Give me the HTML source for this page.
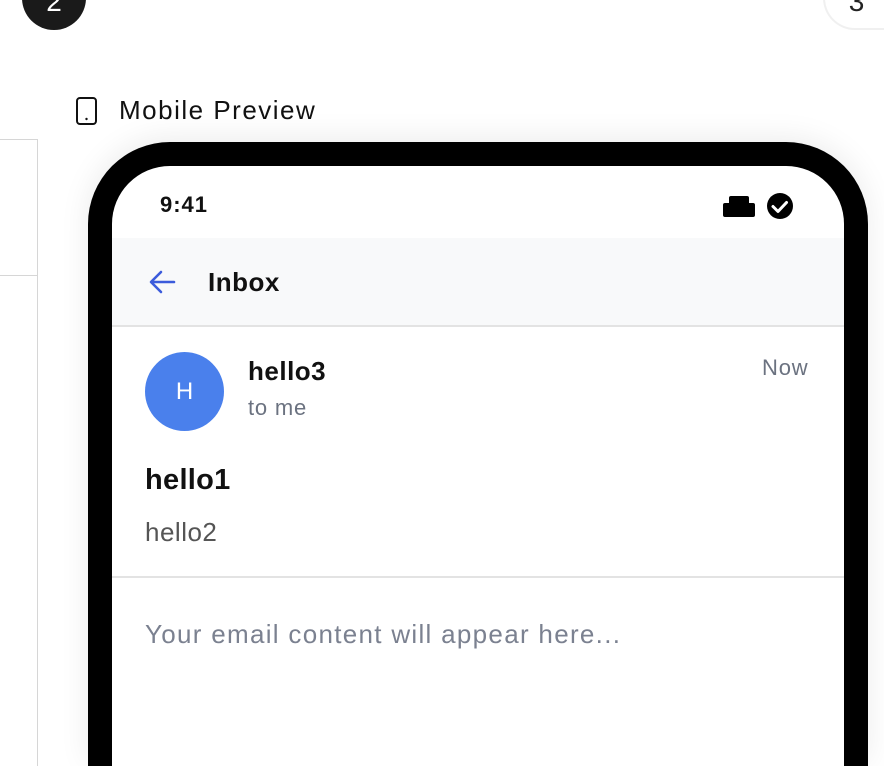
<!DOCTYPE html>
<html style="width:884px;height:766px;overflow:hidden"><head><style>
*{margin:0;padding:0;box-sizing:border-box}
body{width:884px;height:766px;overflow:hidden;background:#fff;font-family:"Liberation Sans",Arial,sans-serif;position:relative}
.abs{position:absolute}
</style></head><body>
<div class="abs" style="left:22px;top:-34px;width:64px;height:64px;border-radius:50%;background:#1a1a1a;color:#fff;font-size:28px;text-align:center;padding-top:14px;line-height:44px">2</div>
<div class="abs" style="left:823px;top:-34px;width:61px;height:64px;border-radius:32px 0 0 32px;background:#fff;border:2px solid #f0f0f0;border-right:none;color:#222;font-size:28px;text-align:center;padding-top:14px;padding-left:4px;line-height:40px">3</div>
<div class="abs" style="left:0;top:139px;width:38px;height:627px;border:1px solid #d6d6d6;border-left:none;border-bottom:none"></div>
<div class="abs" style="left:0;top:275px;width:37px;height:1px;background:#d6d6d6"></div>
<svg class="abs" style="left:75px;top:96px" width="24" height="30" viewBox="0 0 24 30"><rect x="2" y="2" width="19" height="26" rx="3" fill="none" stroke="#111" stroke-width="2"/><circle cx="11.5" cy="23" r="1.2" fill="#111"/></svg>
<div class="abs" style="left:119px;top:95px;font-size:26px;color:#111;letter-spacing:1.5px">Mobile Preview</div>
<div class="abs" style="left:88px;top:142px;width:780px;height:624px;background:#000;border-radius:82px 82px 0 0;box-shadow:0 -4px 30px rgba(0,0,0,0.08)"></div>
<div class="abs" style="left:112px;top:166px;width:732px;height:600px;background:#fff;border-radius:58px 58px 0 0;overflow:hidden">
 <div class="abs" style="left:48px;top:26px;font-size:22px;font-weight:bold;color:#111;letter-spacing:1px">9:41</div>
 <svg class="abs" style="left:611px;top:27px" width="72" height="26" viewBox="0 0 72 26"><rect x="6" y="3" width="20" height="10" rx="2" fill="#000"/><rect x="0" y="10" width="32" height="14" rx="2" fill="#000"/><circle cx="57" cy="13" r="13" fill="#000"/><path d="M50 13.5l5 5 8.5-9" stroke="#fff" stroke-width="3" fill="none" stroke-linecap="round" stroke-linejoin="round"/></svg>
 <div class="abs" style="left:0;top:72px;width:732px;height:89px;background:#f8f9fa;border-bottom:2px solid #e3e3e3"></div>
 <svg class="abs" style="left:36px;top:103px" width="30" height="26" viewBox="0 0 30 26"><path d="M26 13H4M13 3L3 13l10 10" stroke="#3b5bdb" stroke-width="2.6" fill="none" stroke-linecap="round" stroke-linejoin="round"/></svg>
 <div class="abs" style="left:96px;top:101px;font-size:26px;font-weight:bold;color:#111;letter-spacing:0.5px">Inbox</div>
 <div class="abs" style="left:33px;top:186px;width:79px;height:79px;border-radius:50%;background:#4a80ec;color:#fff;font-size:24px;text-align:center;line-height:79px">H</div>
 <div class="abs" style="left:136px;top:190px;font-size:26px;font-weight:bold;color:#111;letter-spacing:0.5px">hello3</div>
 <div class="abs" style="left:136px;top:229px;font-size:22px;color:#6b7280;letter-spacing:0.8px">to me</div>
 <div class="abs" style="left:650px;top:189px;font-size:22px;color:#6b7280;letter-spacing:0.8px">Now</div>
 <div class="abs" style="left:33px;top:298px;font-size:29px;font-weight:bold;color:#111;letter-spacing:0.3px">hello1</div>
 <div class="abs" style="left:33px;top:351px;font-size:26px;color:#555;letter-spacing:0.5px">hello2</div>
 <div class="abs" style="left:0;top:410px;width:732px;height:2px;background:#e3e3e3"></div>
 <div class="abs" style="left:33px;top:453px;font-size:26px;color:#7b8190;letter-spacing:1.3px">Your email content will appear here...</div>
</div>
</body></html>
